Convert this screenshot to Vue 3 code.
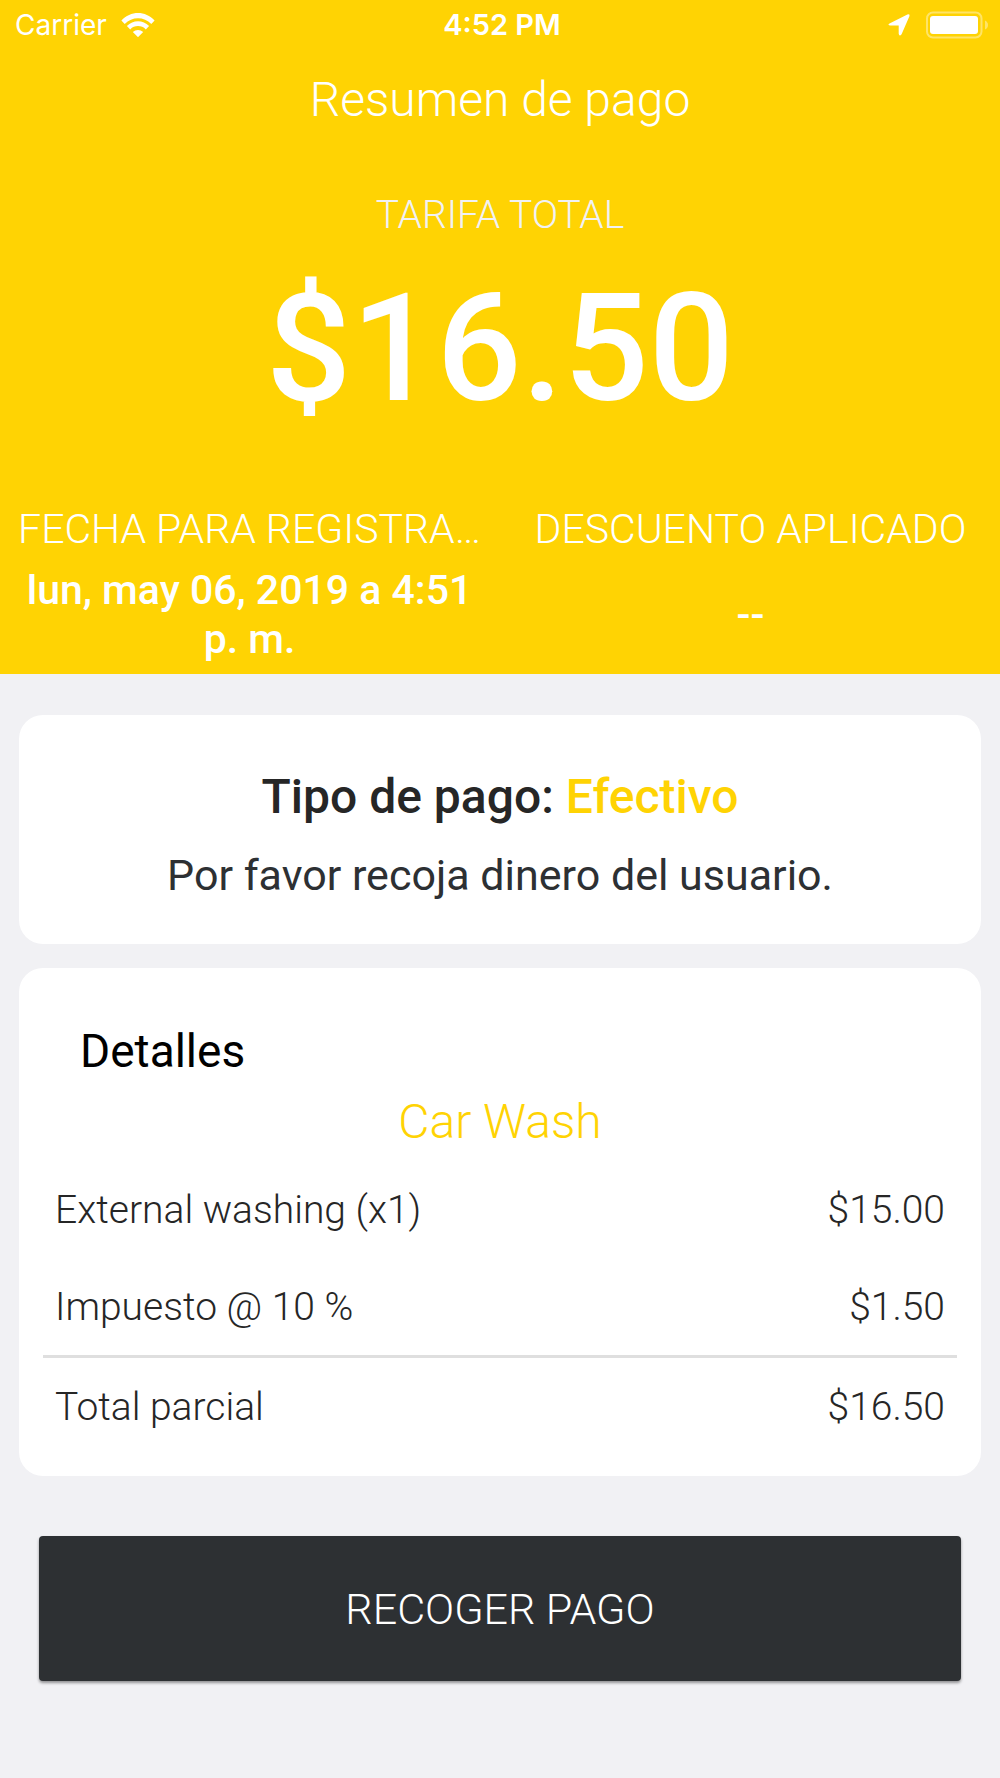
<script setup>
const items = [
  { label: 'External washing (x1)', amount: '$15.00' },
  { label: 'Impuesto @ 10 %', amount: '$1.50' },
]
const subtotal = { label: 'Total parcial', amount: '$16.50' }
</script>

<template>
  <div class="screen">
    <header class="hero">
      <div class="status">
        <div class="status-left">
          <span class="carrier">Carrier</span>
          <svg class="wifi" width="34" height="24" viewBox="0 0 34 24" aria-hidden="true">
            <path d="M0.4 7.6C9.4-2.5 24.6-2.5 33.6 7.6L30.3 11C23 3.2 11 3.2 3.7 11Z" fill="#fff" />
            <path d="M5.9 13.1C12 6.6 22 6.6 28.1 13.1L24.8 16.4C20.5 12 13.5 12 9.2 16.4Z" fill="#fff" />
            <path d="M11.8 19C14.8 16.2 19.2 16.2 22.2 19L17 24.2Z" fill="#fff" />
          </svg>
        </div>
        <span class="time">4:52 PM</span>
        <div class="status-right">
          <svg width="24" height="24" viewBox="0 0 24 24" aria-hidden="true">
            <path d="M2.5 10.5 20.4 1.4Q23.3 0.5 22.4 3.3L14.6 21.2Q12.4 23.8 11.7 20.8V12.4H3.4Q0 12 2.5 10.5Z" fill="#fff" />
          </svg>
          <svg width="64" height="28" viewBox="0 0 64 28" aria-hidden="true">
            <rect x="2" y="1.5" width="54.5" height="25" rx="6" fill="none" stroke="#fff" stroke-opacity=".4" stroke-width="2" />
            <rect x="5" y="5" width="48" height="18" rx="3" fill="#fff" />
            <path d="M60 9.5Q63 11 63 14T60 18.5Z" fill="#fff" fill-opacity=".4" />
          </svg>
        </div>
      </div>
      <h1 class="title">Resumen de pago</h1>
      <p class="fare-label">TARIFA TOTAL</p>
      <p class="fare">$16.50</p>
      <div class="facts">
        <section class="fact">
          <h2 class="fact-label">FECHA PARA REGISTRA…</h2>
          <p class="fact-value">lun, may 06, 2019 a 4:51 p. m.</p>
        </section>
        <section class="fact">
          <h2 class="fact-label">DESCUENTO APLICADO</h2>
          <p class="fact-value">--</p>
        </section>
      </div>
    </header>

    <main class="content">
      <section class="card payment">
        <h2 class="payment-type">Tipo de pago: <span class="accent">Efectivo</span></h2>
        <p class="payment-note">Por favor recoja dinero del usuario.</p>
      </section>

      <section class="card details">
        <h2 class="details-title">Detalles</h2>
        <h3 class="service">Car Wash</h3>
        <table class="bill">
          <tbody>
            <tr v-for="item in items" :key="item.label">
              <th scope="row">{{ item.label }}</th>
              <td>{{ item.amount }}</td>
            </tr>
          </tbody>
          <tfoot>
            <tr>
              <th scope="row">{{ subtotal.label }}</th>
              <td>{{ subtotal.amount }}</td>
            </tr>
          </tfoot>
        </table>
      </section>

      <button class="collect" type="button">RECOGER PAGO</button>
    </main>
  </div>
</template>

<style>
body {
  margin: 0;
  background: #f1f1f4;
}
</style>

<style scoped>
.screen {
  min-height: 100vh;
  background: #f1f1f4;
  color: #262626;
  font-family: Roboto, "Liberation Sans", sans-serif;
}
h1, h2, h3, p {
  margin: 0;
}
.hero {
  padding-bottom: 10px;
  background: #ffd303;
  color: #fff;
  text-align: center;
}
.status {
  display: grid;
  grid-template-columns: 1fr auto 1fr;
  align-items: center;
  height: 50px;
  padding: 0 11px 0 15px;
  font: 400 28px/34px Inter, sans-serif;
}
.status-left,
.status-right {
  display: flex;
  align-items: center;
  gap: 14px;
}
.status-right {
  justify-content: flex-end;
}
.time {
  font-size: 29px;
  font-weight: 600;
}
.title {
  margin-top: 22px;
  font-size: 48px;
  font-weight: 300;
  line-height: 56px;
}
.fare-label {
  margin-top: 63px;
  color: #f1f1f4;
  font-size: 39px;
  font-weight: 300;
  line-height: 48px;
}
.fare {
  margin-top: 22px;
  font-size: 150px;
  font-weight: 500;
  line-height: 176px;
}
.facts {
  display: grid;
  grid-template-columns: 1fr 1fr;
  gap: 36px;
  margin-top: 68px;
  padding: 0 17px;
}
.fact {
  display: flex;
  flex-direction: column;
  gap: 13px;
  min-width: 0;
}
.fact-label {
  font-size: 41px;
  font-weight: 300;
  line-height: 48px;
  white-space: nowrap;
}
.fact-value {
  display: flex;
  flex: 1;
  align-items: center;
  justify-content: center;
  font-size: 41px;
  font-weight: 500;
  line-height: 49px;
}
.content {
  display: flex;
  flex-direction: column;
  gap: 24px;
  padding: 41px 19px;
}
.card {
  border-radius: 24px;
  background: #fff;
}
.payment {
  padding: 54px 24px 43px;
  text-align: center;
}
.payment-type {
  font-size: 48px;
  font-weight: 500;
  line-height: 56px;
}
.accent,
.service {
  color: #ffd303;
}
.payment-note {
  margin-top: 24px;
  color: #2d3033;
  font-size: 43px;
  line-height: 52px;
}
.details {
  padding: 55px 24px 21px;
}
.details-title {
  margin-left: 37px;
  color: #000;
  font-size: 46px;
  font-weight: 400;
  line-height: 56px;
}
.service {
  margin: 15px 0 11px;
  font-size: 48px;
  font-weight: 300;
  line-height: 56px;
  text-align: center;
}
.bill {
  width: 100%;
  border-collapse: separate;
  border-spacing: 0;
  font-size: 39px;
  font-weight: 300;
  line-height: 48px;
}
.bill th,
.bill td {
  height: 97px;
  padding: 0 12px;
}
.bill th {
  font-weight: 300;
  text-align: left;
}
.bill td {
  text-align: right;
}
.bill tfoot th,
.bill tfoot td {
  border-top: 3px solid #dfdfdf;
}
.collect {
  height: 145px;
  margin: 36px 20px 0;
  border: 0;
  border-radius: 4px;
  background: #2d3033;
  box-shadow: 0 2px 3px rgba(0, 0, 0, .4);
  color: #fff;
  font: 300 43px/52px Roboto, "Liberation Sans", sans-serif;
}
</style>
